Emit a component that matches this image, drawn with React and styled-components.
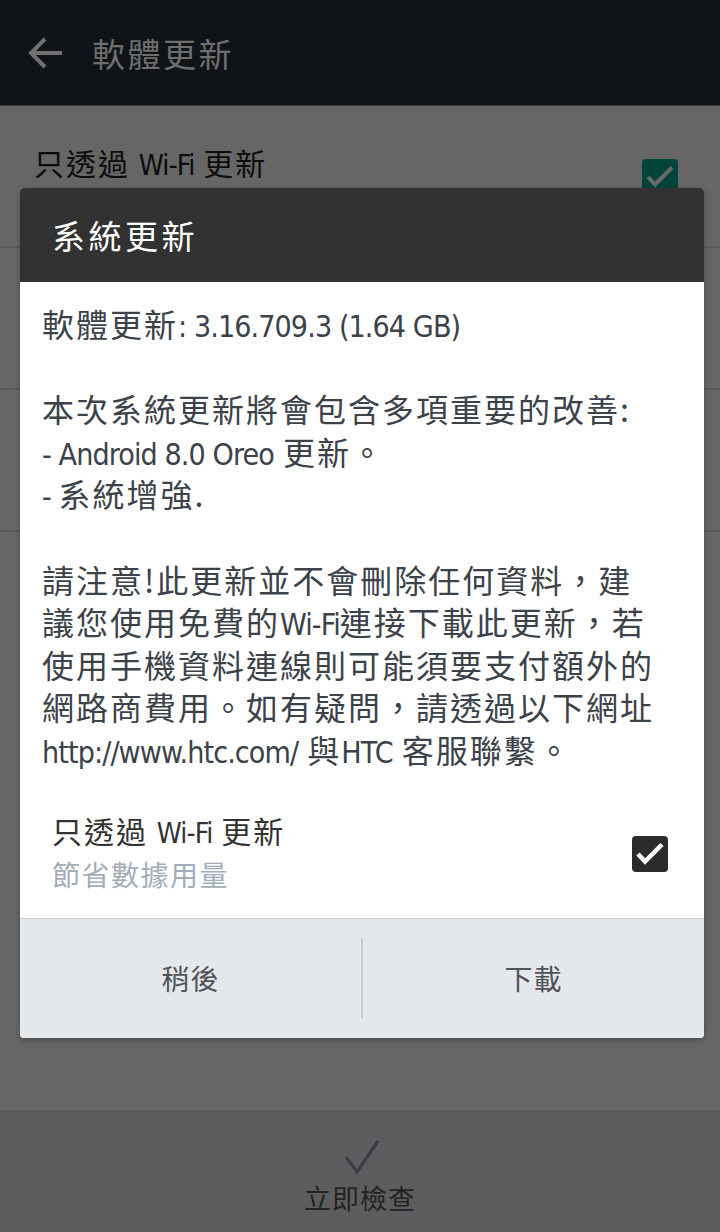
import styled, { createGlobalStyle } from "styled-components";

const FONT = `"Noto Sans CJK TC", "Noto Sans", sans-serif`;
const NARROW = `"DejaVu Sans Condensed", "Noto Sans CJK TC", sans-serif`;

const GlobalStyle = createGlobalStyle`
    html, body {
        margin: 0;
        padding: 0;
        background: #666666;
    }
    body {
        font-family: ${FONT};
    }
    * {
        box-sizing: border-box;
    }
`;

const Page = styled.div`
    position: relative;
    width: 720px;
    height: 1232px;
    overflow: hidden;
    display: flex;
    flex-direction: column;
    background: #666666;
`;

const AppBar = styled.header`
    height: 106px;
    flex-shrink: 0;
    display: flex;
    align-items: center;
    padding-left: 26px;
    background: #101418;
    border-bottom: 1px solid #3a3d40;
`;

const AppTitle = styled.h1`
    margin: 0 0 0 26px;
    font-size: 33px;
    font-weight: 400;
    letter-spacing: 2.5px;
    color: #6f6f6f;
`;

const SettingRow = styled.div`
    height: 142px;
    flex-shrink: 0;
    display: flex;
    align-items: flex-start;
    justify-content: space-between;
    padding: 34px 42px 0 34px;
    border-bottom: 2px solid #5a5a5a;
`;

const RowTitle = styled.div`
    height: 44px;
    font-size: 30px;
    line-height: 44px;
    letter-spacing: 2px;
    white-space: nowrap;
    color: ${(p) => p.$color || "#0c0c0c"};
`;

const RowSub = styled.div`
    font-size: 28px;
    line-height: 44px;
    letter-spacing: 1.5px;
    color: ${(p) => p.$color || "#596069"};
`;

const Latin = styled.span`
    font-family: ${NARROW};
    font-size: 0.94em;
    letter-spacing: -0.9px;
    line-height: 1;
`;

const GreenBox = styled.div`
    width: 36px;
    height: 36px;
    margin-top: 19px;
    border-radius: 4px;
    background: #00443a;
    display: flex;
    align-items: center;
    justify-content: center;
`;

const Filler = styled.div`
    flex: 1;
`;

const BottomBar = styled.footer`
    height: 122px;
    flex-shrink: 0;
    display: flex;
    flex-direction: column;
    align-items: center;
    padding-top: 26px;
    background: #5c5d5f;
    border-top: 2px solid #575859;
`;

const BottomLabel = styled.div`
    font-size: 27px;
    line-height: 40px;
    letter-spacing: 1px;
    color: #232323;
`;

const Layer = styled.div`
    position: absolute;
    inset: 0;
    display: flex;
    justify-content: flex-start;
    align-items: flex-start;
    padding: 188px 0 0 20px;
`;

const Dialog = styled.section`
    width: 684px;
    border-radius: 4px;
    overflow: hidden;
    background: #ffffff;
    box-shadow: 0 2px 6px rgba(0, 0, 0, 0.25);
`;

const DialogHeader = styled.div`
    height: 94px;
    display: flex;
    align-items: center;
    padding-left: 32px;
    background: #323232;
`;

const DialogTitle = styled.h2`
    margin: 0;
    font-size: 33px;
    font-weight: 400;
    letter-spacing: 3.5px;
    color: #ffffff;
`;

const DialogBody = styled.div`
    padding: 20px 22px 0 22px;
    font-size: 32px;
    line-height: 42.6px;
    letter-spacing: 2px;
    color: #3c4249;
`;

const Para = styled.div`
    margin-bottom: ${(p) => (p.$last ? "0" : "42.6px")};
`;

const Line = styled.div`
    height: 42.6px;
    white-space: nowrap;
`;

const OptionRow = styled.div`
    display: flex;
    align-items: center;
    justify-content: space-between;
    padding: 37px 36px 22px 32px;
`;

const DarkBox = styled.div`
    width: 36px;
    height: 36px;
    margin-top: 4px;
    border-radius: 4px;
    background: #2b2b2b;
    display: flex;
    align-items: center;
    justify-content: center;
`;

const ButtonBar = styled.div`
    height: 120px;
    display: grid;
    grid-template-columns: 1fr 2px 1fr;
    align-items: center;
    background: #e5e8eb;
    border-top: 1px solid #c9ccd0;
`;

const DialogButton = styled.button`
    height: 100%;
    border: none;
    background: transparent;
    font-family: ${FONT};
    font-size: 28px;
    letter-spacing: 1px;
    color: #505257;
    padding: 0;
`;

const Divider = styled.div`
    width: 2px;
    height: 80px;
    background: #c9ccd0;
`;

const Check = ({ color, width = 4.5 }) => (
    <svg width="36" height="36" viewBox="0 0 36 36">
        <polyline
            points="6,18 13,25.5 30,8.5"
            fill="none"
            stroke={color}
            strokeWidth={width}
        />
    </svg>
);

const BackArrow = () => (
    <svg width="40" height="40" viewBox="0 0 40 40">
        <path
            d="M36 20 H6 M19 6 L5 20 L19 34"
            fill="none"
            stroke="#707070"
            strokeWidth="4"
        />
    </svg>
);

const BigCheck = () => (
    <svg width="40" height="40" viewBox="0 0 40 40">
        <polyline
            points="6,19 17,34 38,3"
            fill="none"
            stroke="#3b3e47"
            strokeWidth="3.2"
        />
    </svg>
);

const WifiLabel = () => (
    <>
        只透過 <Latin>Wi-Fi</Latin> 更新
    </>
);

export default function App() {
    return (
        <>
            <GlobalStyle />
            <Page>
                <AppBar>
                    <BackArrow />
                    <AppTitle>軟體更新</AppTitle>
                </AppBar>
                <SettingRow>
                    <div>
                        <RowTitle><WifiLabel /></RowTitle>
                        <RowSub>節省數據用量</RowSub>
                    </div>
                    <GreenBox>
                        <Check color="#6a6a6a" width={4} />
                    </GreenBox>
                </SettingRow>
                <SettingRow />
                <SettingRow />
                <Filler />
                <BottomBar>
                    <BigCheck />
                    <BottomLabel>立即檢查</BottomLabel>
                </BottomBar>

                <Layer>
                    <Dialog>
                        <DialogHeader>
                            <DialogTitle>系統更新</DialogTitle>
                        </DialogHeader>
                        <DialogBody>
                            <Para>
                                <Line>軟體更新<Latin>: 3.16.709.3 (1.64 GB)</Latin></Line>
                            </Para>
                            <Para>
                                <Line>本次系統更新將會包含多項重要的改善:</Line>
                                <Line><Latin>- Android 8.0 Oreo</Latin> 更新。</Line>
                                <Line><Latin>- </Latin>系統增強.</Line>
                            </Para>
                            <Para $last>
                                <Line>請注意!此更新並不會刪除任何資料，建</Line>
                                <Line>議您使用免費的<Latin>Wi-Fi</Latin>連接下載此更新，若</Line>
                                <Line>使用手機資料連線則可能須要支付額外的</Line>
                                <Line>網路商費用。如有疑問，請透過以下網址</Line>
                                <Line><Latin>http://www.htc.com/</Latin> 與<Latin>HTC</Latin> 客服聯繫。</Line>
                            </Para>
                        </DialogBody>
                        <OptionRow>
                            <div>
                                <RowTitle $color="#333333"><WifiLabel /></RowTitle>
                                <RowSub $color="#a3adb9">節省數據用量</RowSub>
                            </div>
                            <DarkBox>
                                <Check color="#ffffff" />
                            </DarkBox>
                        </OptionRow>
                        <ButtonBar>
                            <DialogButton>稍後</DialogButton>
                            <Divider />
                            <DialogButton>下載</DialogButton>
                        </ButtonBar>
                    </Dialog>
                </Layer>
            </Page>
        </>
    );
}
